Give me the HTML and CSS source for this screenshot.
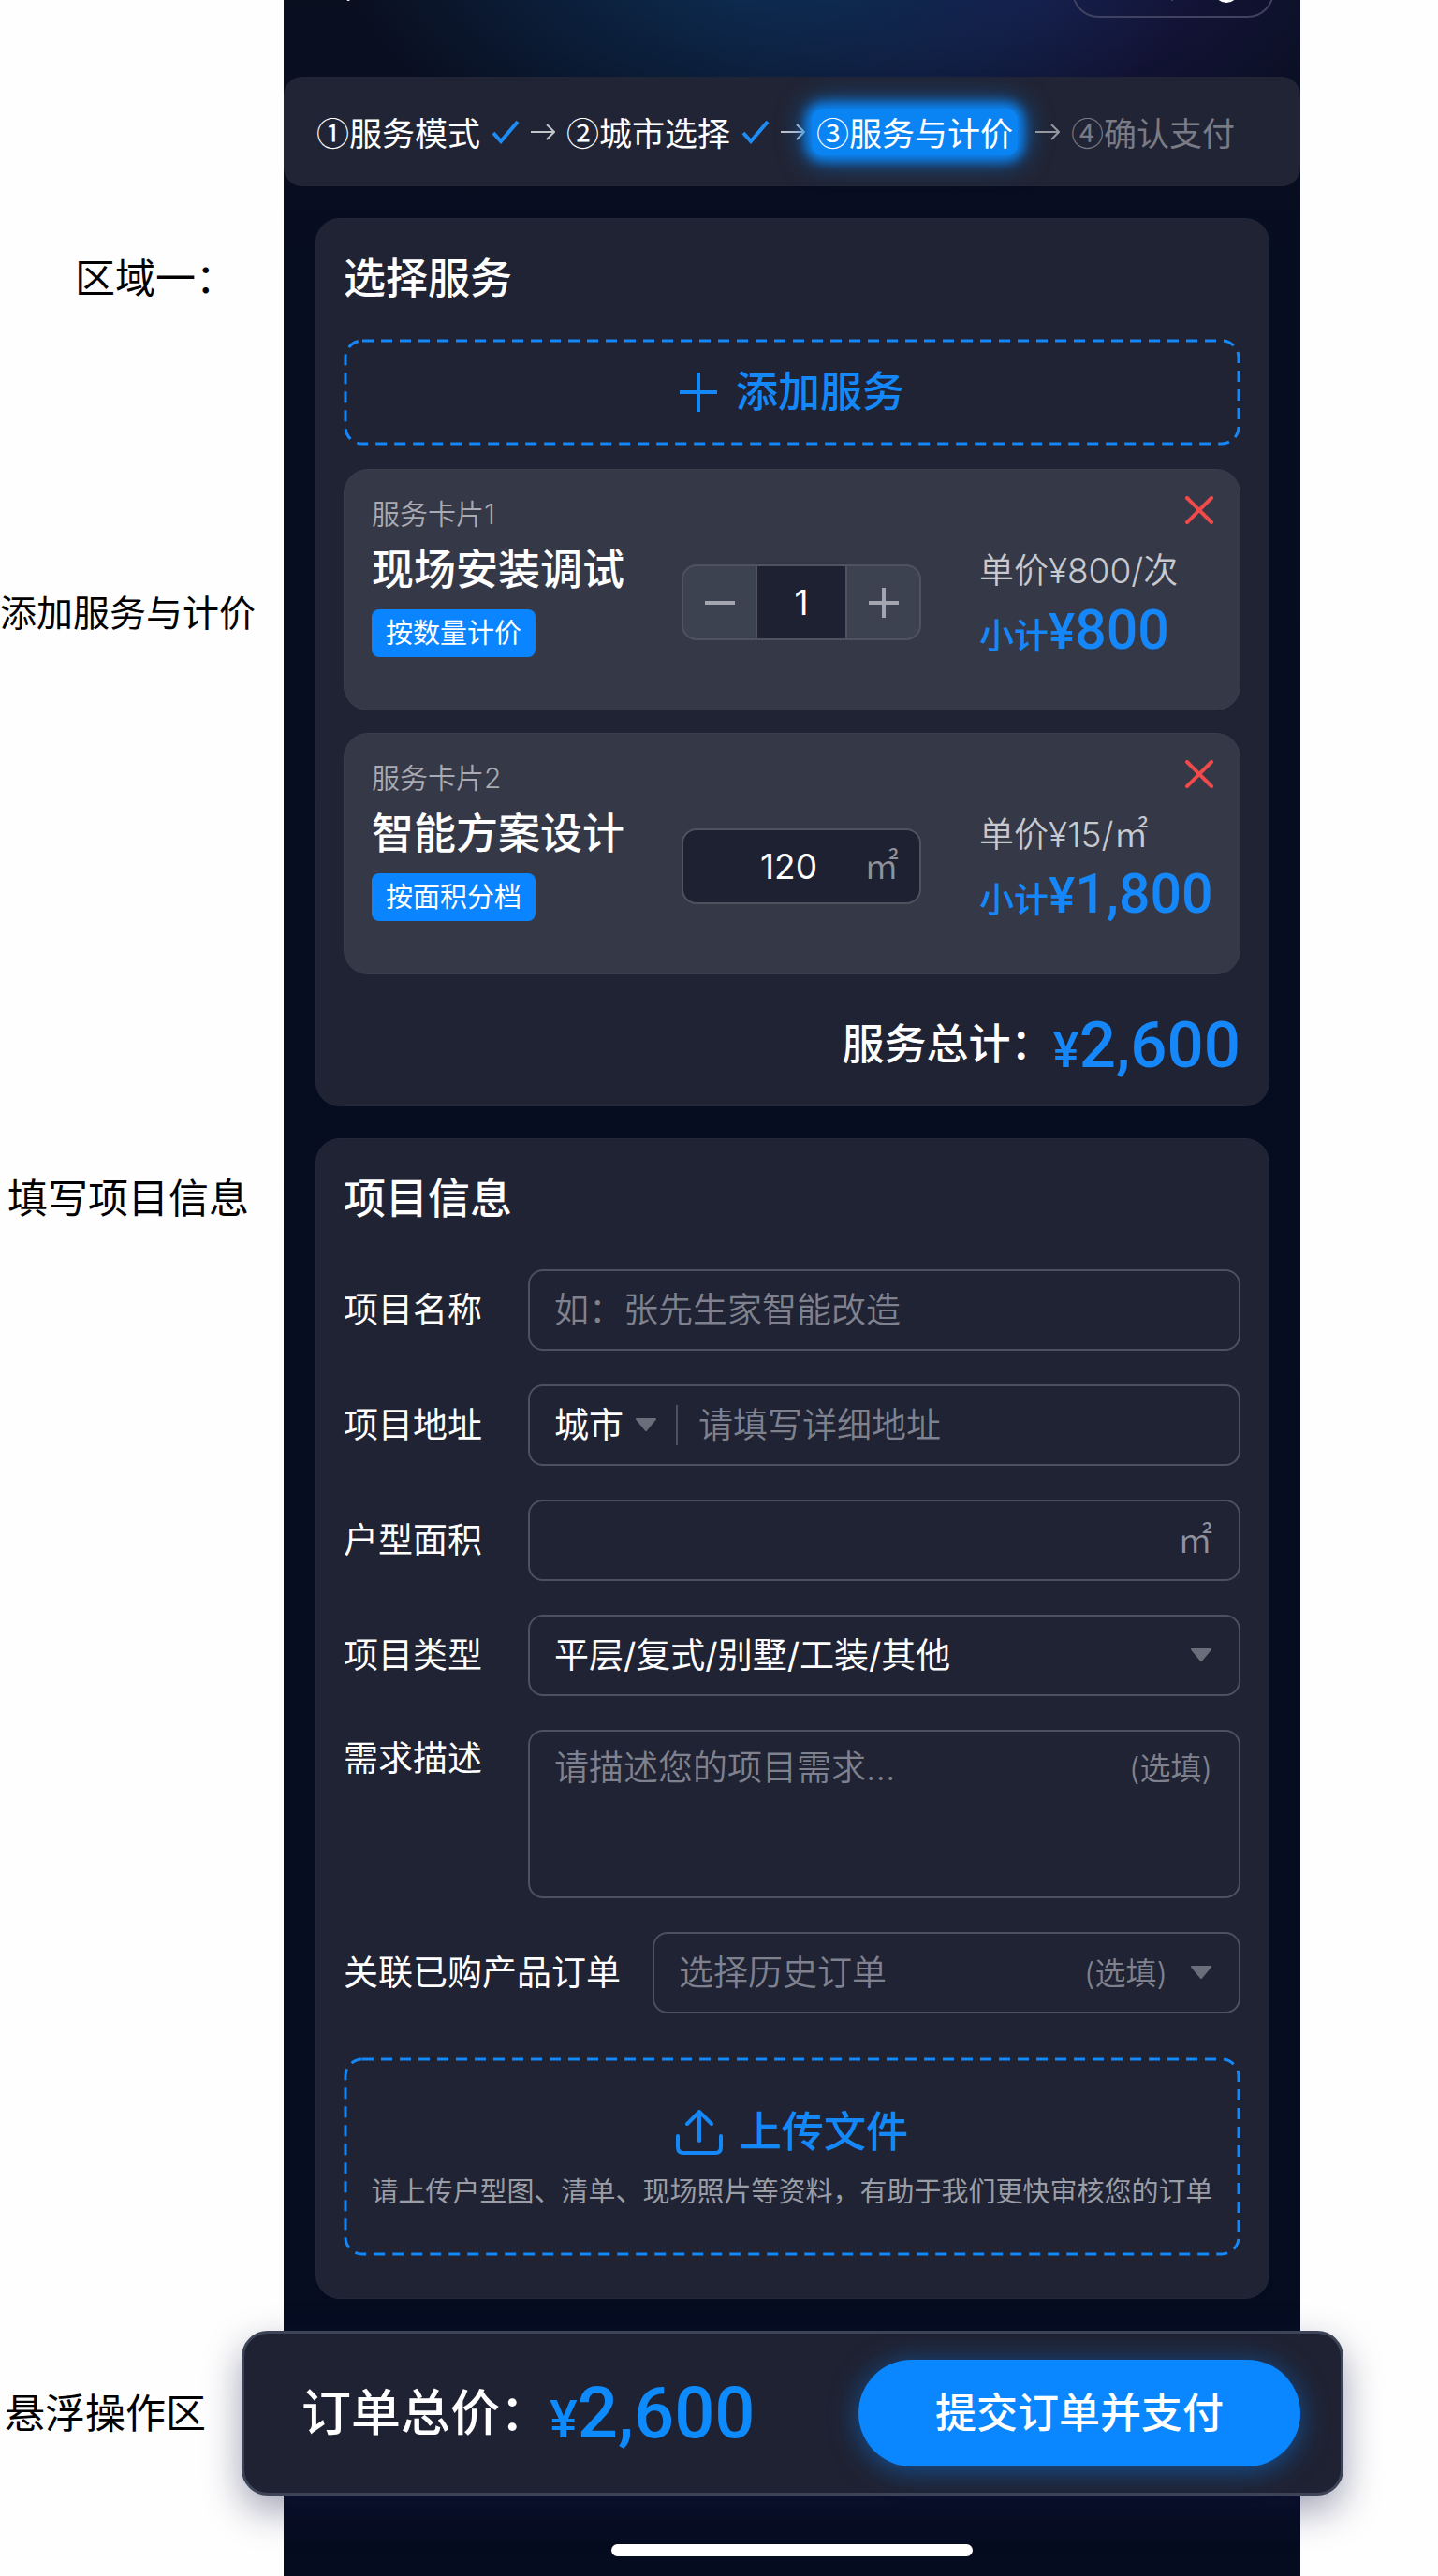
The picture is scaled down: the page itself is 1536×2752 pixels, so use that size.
FILE: index.html
```html
<!DOCTYPE html>
<html lang="zh-CN">

<head>
  <meta charset="UTF-8">
  <meta name="viewport" content="width=device-width, initial-scale=1.0">
  <title>服务与计价</title>
  <link rel="stylesheet" href="styles.css">
</head>

<body>
  <div class="page">
    <div class="phone-bg"></div>

    <!-- 顶部 -->
    <header class="top">
      <div class="nav">
        <a class="back" href="#" aria-label="返回">
          <svg width="24" height="40" viewBox="0 0 24 40"><path d="M21 3 5 20l16 17" /></svg>
        </a>
        <div class="capsule">
          <svg width="200" height="56" viewBox="0 0 200 56">
            <circle cx="50" cy="28" r="5" />
            <path d="M105 16v21" />
            <circle class="ring" cx="163" cy="26" r="11" />
          </svg>
        </div>
      </div>
      <nav class="steps">
        <span class="step">①服务模式</span>
        <svg class="check" width="30" height="26" viewBox="0 0 30 26"><path d="m2 14 8 9L28 2" /></svg>
        <svg class="arrow" width="26" height="20" viewBox="0 0 26 20"><path d="M0 10h25M17 2l8 8-8 8" /></svg>
        <span class="step">②城市选择</span>
        <svg class="check" width="30" height="26" viewBox="0 0 30 26"><path d="m2 14 8 9L28 2" /></svg>
        <svg class="arrow" width="26" height="20" viewBox="0 0 26 20"><path d="M0 10h25M17 2l8 8-8 8" /></svg>
        <span class="step active">③服务与计价</span>
        <svg class="arrow dim" width="26" height="20" viewBox="0 0 26 20"><path d="M0 10h25M17 2l8 8-8 8" /></svg>
        <span class="step todo">④确认支付</span>
      </nav>
    </header>

    <!-- 选择服务 -->
    <aside class="note note-services">
      <p class="note-area">区域一：</p>
      <p class="note-small">添加服务与计价</p>
    </aside>
    <section class="panel services">
      <h2>选择服务</h2>
      <button class="dashed add" type="button">
        <svg class="dash"><rect rx="18" /></svg>
        <svg width="40" height="42" viewBox="0 0 40 42"><path d="M20 0v42M0 21h40" /></svg>
        添加服务
      </button>

      <article class="service">
        <button class="close" type="button" aria-label="删除服务卡片1">
          <svg width="30" height="30" viewBox="0 0 30 30"><path d="m2 2 26 26M28 2 2 28" /></svg>
        </button>
        <div class="info">
          <div class="index">服务卡片1</div>
          <h3>现场安装调试</h3>
          <span class="tag">按数量计价</span>
        </div>
        <div class="control stepper">
          <button type="button" aria-label="减少">
            <svg width="32" height="32" viewBox="0 0 32 32"><path d="M0 16h32" /></svg>
          </button>
          <input type="text" value="1" aria-label="数量">
          <button type="button" aria-label="增加">
            <svg width="32" height="32" viewBox="0 0 32 32"><path d="M0 16h32M16 0v32" /></svg>
          </button>
        </div>
        <div class="price">
          <div class="unit-price">单价¥800/次</div>
          <div class="subtotal">小计<b><i>¥</i>800</b></div>
        </div>
      </article>

      <article class="service">
        <button class="close" type="button" aria-label="删除服务卡片2">
          <svg width="30" height="30" viewBox="0 0 30 30"><path d="m2 2 26 26M28 2 2 28" /></svg>
        </button>
        <div class="info">
          <div class="index">服务卡片2</div>
          <h3>智能方案设计</h3>
          <span class="tag">按面积分档</span>
        </div>
        <div class="control area">
          <input type="text" value="120" aria-label="面积">
          <span>㎡</span>
        </div>
        <div class="price">
          <div class="unit-price">单价¥15/㎡</div>
          <div class="subtotal">小计<b><i>¥</i>1,800</b></div>
        </div>
      </article>

      <div class="total">服务总计：<b><i>¥</i>2,600</b></div>
    </section>

    <!-- 项目信息 -->
    <aside class="note note-project">
      <p>填写项目信息</p>
    </aside>
    <section class="panel project">
      <h2>项目信息</h2>
      <form class="form">
        <div class="field">
          <label for="name">项目名称</label>
          <div class="box"><input id="name" type="text" placeholder="如：张先生家智能改造"></div>
        </div>
        <div class="field">
          <label for="address">项目地址</label>
          <div class="box">
            <select class="city" aria-label="城市">
              <option>城市</option>
            </select>
            <svg class="caret" width="24" height="15" viewBox="0 0 24 15"><path d="M2 1h20L12 13z" /></svg>
            <span class="line"></span>
            <input id="address" type="text" placeholder="请填写详细地址">
          </div>
        </div>
        <div class="field">
          <label for="size">户型面积</label>
          <div class="box"><input id="size" type="text"><span class="unit">㎡</span></div>
        </div>
        <div class="field">
          <label for="type">项目类型</label>
          <div class="box">
            <select id="type">
              <option>平层/复式/别墅/工装/其他</option>
            </select>
            <svg class="caret" width="24" height="15" viewBox="0 0 24 15"><path d="M2 1h20L12 13z" /></svg>
          </div>
        </div>
        <div class="field top-aligned">
          <label for="desc">需求描述</label>
          <div class="box tall">
            <textarea id="desc" placeholder="请描述您的项目需求..."></textarea>
            <span class="optional">(选填)</span>
          </div>
        </div>
        <div class="field">
          <label for="order">关联已购产品订单</label>
          <div class="box">
            <select id="order" class="empty">
              <option>选择历史订单</option>
            </select>
            <span class="optional">(选填)</span>
            <svg class="caret" width="24" height="15" viewBox="0 0 24 15"><path d="M2 1h20L12 13z" /></svg>
          </div>
        </div>
        <button class="dashed upload" type="button">
          <svg class="dash"><rect rx="18" /></svg>
          <span class="upload-title">
            <svg width="50" height="48" viewBox="0 0 50 48"><path d="M25 33V3M12 15 25 2l13 13M2 28v12q0 6 6 6h34q6 0 6-6V28" /></svg>
            上传文件
          </span>
          <span class="hint">请上传户型图、清单、现场照片等资料，有助于我们更快审核您的订单</span>
        </button>
      </form>
    </section>

    <!-- 悬浮操作区 -->
    <aside class="note note-bar">
      <p>悬浮操作区</p>
    </aside>
    <footer class="bar">
      <div class="sum">订单总价：<b><i>¥</i>2,600</b></div>
      <button class="submit" type="button">提交订单并支付</button>
    </footer>
    <div class="home"></div>
  </div>
</body>

</html>
```

FILE: styles.css
```css
* {
  box-sizing: border-box;
  margin: 0;
  padding: 0;
}

body {
  background: #fefefe;
  color: #fff;
  font-family: "Inter", "Noto Sans CJK SC", sans-serif;
  font-size: 37px;
  line-height: 50px;
}

button,
input,
select,
textarea {
  min-width: 0;
  border: 0;
  outline: 0;
  background: none;
  color: inherit;
  font: inherit;
}

button {
  cursor: pointer;
}

select {
  appearance: none;
}

svg {
  display: block;
  flex: none;
  fill: none;
  stroke: currentColor;
}

i {
  font-style: normal;
}

h2,
h3 {
  font-size: 45px;
  font-weight: 500;
}

/* 左侧标注 | 手机 | 右侧留白 */
.page {
  display: grid;
  grid-template-columns: minmax(0, 303fr) minmax(0, 1086fr) minmax(0, 147fr);
  grid-template-rows: repeat(4, auto) 1fr;
  min-height: 100vh;
}

.phone-bg {
  grid-column: 2;
  grid-row: 1 / -1;
  background:
    radial-gradient(460px 260px at 48% -60px, #0d3158 0%, rgba(13, 49, 88, 0) 100%),
    radial-gradient(400px 220px at 72% -20px, #1a1849 0%, rgba(26, 24, 73, 0) 100%),
    linear-gradient(#0a0f20 0, #070d20 300px, #060c20 100%);
}

.top {
  grid-column: 2;
  grid-row: 1;
  margin-bottom: 34px;
}

.nav {
  display: flex;
  justify-content: space-between;
  height: 82px;
  padding: 0 28px 0 48px;
  overflow: hidden;
}

.back,
.capsule {
  margin-top: -38px;
  color: #fff;
}

.back {
  stroke-width: 4;
  stroke-linecap: round;
}

.capsule {
  width: 216px;
  height: 57px;
  border: 2px solid #3f4260;
  border-radius: 32px;
}

.capsule path {
  stroke: #3f4260;
  stroke-width: 2;
}

.capsule .ring {
  stroke-width: 4;
  fill: #fff;
}

.steps {
  display: flex;
  align-items: center;
  gap: 12px;
  height: 117px;
  padding: 0 35px;
  border-radius: 20px;
  background: #212434;
  font-family: "Noto Sans CJK SC", sans-serif;
  font-size: 35px;
  white-space: nowrap;
}

.step.active {
  padding: 0 5px;
  margin: 0 -5px;
  border-radius: 12px;
  background: #0b84f3;
  box-shadow: 0 0 12px 6px #0b84f3, 0 0 28px 8px rgba(11, 132, 243, .6);
}

.step.active + .arrow {
  margin-left: 12px;
}

.step.todo {
  color: #797b85;
}

.check {
  stroke: #1e8cf5;
  stroke-width: 4;
}

.arrow {
  stroke: #c3c4ca;
  stroke-width: 2;
}

.arrow.dim {
  stroke: #9496a0;
}

/* 标注 */
.note {
  grid-column: 1;
  padding: 39px 0 0 8px;
  color: #000;
  font-size: 43px;
  white-space: nowrap;
}

.note-services {
  grid-row: 2;
  padding-left: 0;
}

.note-project {
  grid-row: 3;
}

.note-area {
  padding-left: 80px;
}

.note-small {
  margin-top: 308px;
  font-size: 39px;
}

.note-bar {
  grid-row: 4;
  align-self: center;
  padding: 0 0 0 5px;
}

/* 卡片 */
.panel {
  grid-column: 2;
  margin: 0 33px 34px 34px;
  padding: 32px 30px 20px 29px;
  border: 1px solid #232738;
  border-radius: 26px;
  background: #1f2333;
}

.panel h2 {
  margin-bottom: 32px;
  line-height: 64px;
}

.services {
  grid-row: 2;
}

.project {
  grid-row: 3;
  padding-bottom: 45px;
}

.dashed {
  position: relative;
  display: flex;
  align-items: center;
  justify-content: center;
  width: 100%;
  color: #1488f8;
}

.dash {
  position: absolute;
  inset: 0;
  width: 100%;
  height: 100%;
}

.dash rect {
  x: 2px;
  y: 2px;
  width: calc(100% - 4px);
  height: calc(100% - 4px);
  stroke-width: 3;
  stroke-dasharray: 12 8;
}

.add {
  gap: 20px;
  height: 114px;
  margin-bottom: 25px;
  font-size: 45px;
  font-weight: 500;
  stroke-width: 4;
}

.service {
  position: relative;
  display: grid;
  grid-template-columns: minmax(0, 331fr) minmax(0, 318fr) minmax(0, 249fr);
  align-items: start;
  margin-bottom: 24px;
  padding: 27px 29px 45px;
  border: 1px solid #3a3e4b;
  border-radius: 26px;
  background: #353846;
}

.close {
  position: absolute;
  top: 28px;
  right: 28px;
  color: #f04a4a;
  stroke-width: 4;
  stroke-linecap: round;
}

.index {
  color: #a9aab2;
  font-size: 30px;
  font-weight: 350;
  line-height: 40px;
}

.service h3 {
  margin: 10px 0 12px;
  line-height: 60px;
}

.tag {
  display: block;
  width: fit-content;
  padding: 0 15px;
  border-radius: 8px;
  background: #0a84ff;
  font-size: 29px;
  line-height: 51px;
}

.control {
  display: flex;
  width: 256px;
  height: 81px;
  margin-top: 74px;
  border: 2px solid #50535f;
  border-radius: 16px;
  overflow: hidden;
}

.control input {
  width: 98px;
  background: #1e2131;
  text-align: center;
}

.stepper {
  background: #3d4250;
}

.stepper button {
  display: grid;
  flex: 1;
  place-items: center;
  color: #a3a6b0;
  stroke-width: 4;
}

.stepper input {
  border: solid #50535f;
  border-width: 0 2px;
}

.area {
  align-items: center;
  padding: 0 22px 0 46px;
  background: #1e2131;
}

.area input {
  flex: 1;
}

.area span,
.unit {
  color: #8f919c;
  font-weight: 350;
}

.area span {
  margin-left: 14px;
}

.price {
  margin-top: 56px;
  white-space: nowrap;
}

.unit-price {
  color: #c8c9ce;
  font-weight: 350;
}

.subtotal {
  margin-top: 8px;
  color: #1687f8;
  font-weight: 500;
  line-height: 66px;
}

b {
  color: #1687f8;
  font-family: "Roboto", sans-serif;
  font-weight: 500;
  line-height: 1;
}

.subtotal b {
  font-size: 59px;
}

.subtotal i {
  font-size: 53px;
}

.total {
  display: flex;
  align-items: center;
  justify-content: flex-end;
  margin-top: 30px;
  font-size: 45px;
  font-weight: 500;
  line-height: 90px;
}

.total b {
  font-size: 69px;
}

.total i {
  font-size: 53px;
}

/* 表单 */
.form {
  display: flex;
  flex-direction: column;
  gap: 36px;
  padding-top: 11px;
}

.field {
  display: flex;
  align-items: center;
  gap: 34px;
}

.field label {
  flex: none;
  min-width: 163px;
}

.field.top-aligned {
  align-items: flex-start;
}

.top-aligned label {
  padding-top: 6px;
}

.box {
  display: flex;
  flex: 1;
  align-items: center;
  min-width: 0;
  height: 87px;
  padding: 0 28px 0 26px;
  border: 2px solid #4d515f;
  border-radius: 16px;
}

.box input,
.box select,
.box textarea {
  flex: 1;
}

.box .city {
  flex: none;
}

.box.tall {
  align-items: flex-start;
  height: 180px;
  padding-top: 14px;
}

textarea {
  height: 140px;
  resize: none;
}

::placeholder,
.empty,
.optional {
  color: #7f828e;
  font-weight: 350;
  opacity: 1;
}

.optional {
  font-size: 33px;
}

.caret {
  fill: #6a6d7a;
  stroke: #6a6d7a;
  stroke-width: 2;
  stroke-linejoin: round;
}

.city + .caret {
  margin-left: 12px;
}

.optional + .caret {
  margin-left: 24px;
}

.line {
  width: 2px;
  height: 43px;
  margin: 0 22px 0 20px;
  background: #4d515f;
}

.upload {
  flex-direction: column;
  gap: 14px;
  margin-top: 11px;
  height: 212px;
  padding-top: 12px;
}

.upload-title {
  display: flex;
  align-items: center;
  gap: 18px;
  font-size: 45px;
  font-weight: 500;
  stroke-width: 4;
  stroke-linecap: round;
}

.hint {
  color: #9b9da6;
  font-size: 29px;
  white-space: nowrap;
}

/* 底部操作栏 */
.bar {
  display: flex;
  grid-column: 2;
  grid-row: 4;
  align-items: center;
  justify-content: space-between;
  height: 176px;
  margin: 0 -46px 0 -45px;
  padding: 0 43px 0 61px;
  border: 3px solid #3d4457;
  border-radius: 28px;
  background: #1f2232;
  box-shadow: 0 16px 40px rgba(20, 26, 70, .4);
  white-space: nowrap;
}

.sum {
  display: flex;
  align-items: center;
  font-size: 53px;
  font-weight: 500;
  line-height: 90px;
}

.sum b {
  color: #0d8afc;
  font-size: 76px;
}

.sum i {
  font-size: 56px;
}

.submit {
  width: 472px;
  height: 114px;
  border-radius: 57px;
  background: #0a86ff;
  box-shadow: 0 4px 30px rgba(10, 134, 255, .5);
  font-size: 44px;
  font-weight: 500;
}

.home {
  grid-column: 2;
  grid-row: 5;
  justify-self: center;
  width: 386px;
  height: 13px;
  margin: 52px 0 20px;
  border-radius: 7px;
  background: #fff;
}
```
